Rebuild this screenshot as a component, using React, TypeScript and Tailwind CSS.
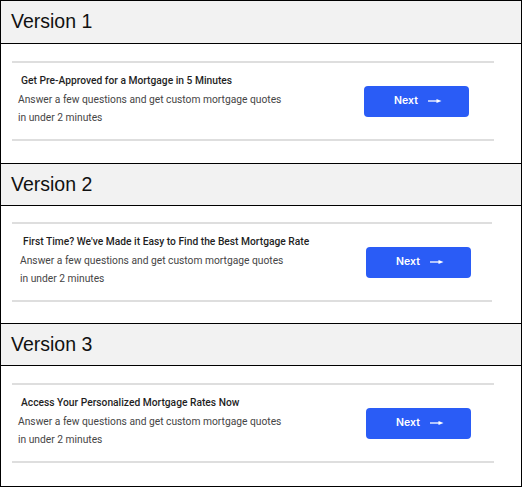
import React from "react";

type Row = {
  version: string;
  title: string;
  headerH: string;
  contentH: string;
  lineTop: string;
  blockW: string;
  titlePl: string;
  descPl: string;
  btnMr: string;
};

const rows: Row[] = [
  {
    version: "Version 1",
    title: "Get Pre-Approved for a Mortgage in 5 Minutes",
    headerH: "h-[43px]",
    contentH: "h-[119px]",
    lineTop: "pt-[17px]",
    blockW: "w-[482px]",
    titlePl: "pl-[9px]",
    descPl: "pl-[6px]",
    btnMr: "mr-[25px]",
  },
  {
    version: "Version 2",
    title: "First Time? We've Made it Easy to Find the Best Mortgage Rate",
    headerH: "h-[42px]",
    contentH: "h-[117px]",
    lineTop: "pt-[16px]",
    blockW: "w-[480px]",
    titlePl: "pl-[11px]",
    descPl: "pl-[8px]",
    btnMr: "mr-[21px]",
  },
  {
    version: "Version 3",
    title: "Access Your Personalized Mortgage Rates Now",
    headerH: "h-[42px]",
    contentH: "h-[120px]",
    lineTop: "pt-[17px]",
    blockW: "w-[482px]",
    titlePl: "pl-[9px]",
    descPl: "pl-[6px]",
    btnMr: "mr-[23px]",
  },
];

function Arrow() {
  return (
    <svg width="14" height="6" viewBox="0 0 14 6" className="ml-[10px]">
      <line x1="0" y1="3" x2="9" y2="3" stroke="white" strokeWidth="1.3" />
      <polygon points="8.5,0.9 13.5,3 8.5,5.1" fill="white" />
    </svg>
  );
}

export default function App() {
  return (
    <div className="w-[523px] bg-white">
      <div className="w-[522px] border border-black">
        {rows.map((r, i) => (
          <div key={i} className={i > 0 ? "border-t border-black" : ""}>
            <div
              className={`${r.headerH} bg-[#f2f2f2] border-b border-black flex items-center pl-[10px] text-[19.5px] text-[#111]`}
              style={{ fontFamily: '"Liberation Sans", Arial, sans-serif' }}
            >
              {r.version}
            </div>
            <div className={`${r.contentH} ${r.lineTop} pl-[11px]`}>
              <div
                className={`${r.blockW} h-[80px] border-y-2 border-[#dedede] flex items-center justify-between`}
                style={{ fontFamily: 'Roboto, "Noto Sans", sans-serif' }}
              >
                <div className="flex flex-col self-start pt-[9px]">
                  <div className={`${r.titlePl} text-[10.25px] leading-[18.5px] font-medium text-[#1f1f1f]`}>
                    {r.title}
                  </div>
                  <div className={`${r.descPl} text-[10.25px] leading-[18.5px] text-[#454545]`}>
                    Answer a few questions and get custom mortgage quotes
                  </div>
                  <div className={`${r.descPl} text-[10.25px] leading-[18px] text-[#454545]`}>
                    in under 2 minutes
                  </div>
                </div>
                <button
                  className={`${r.btnMr} w-[105px] h-[31px] rounded-[4px] bg-[#2a5cf6] flex items-center justify-center pl-[3px] text-white text-[10.5px] font-semibold`}
                  style={{ fontFamily: 'Inter, Roboto, sans-serif' }}
                >
                  Next
                  <Arrow />
                </button>
              </div>
            </div>
          </div>
        ))}
      </div>
    </div>
  );
}
